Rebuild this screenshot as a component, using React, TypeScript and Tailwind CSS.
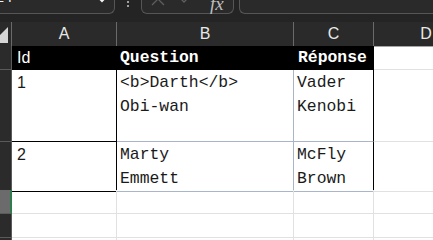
import React from 'react';

const gridCols = 'grid grid-cols-[12px_105px_177px_80px_105px]';
const mono = "font-['Liberation_Mono',monospace] text-[16.4px] leading-[24px]";
const sans = "font-['Liberation_Sans',Arial,sans-serif]";

interface Row {
  id: string;
  question: string[];
  answer: string[];
  height: string;
}

const rows: Row[] = [
  { id: '1', question: ['<b>Darth</b>', 'Obi-wan'], answer: ['Vader', 'Kenobi'], height: 'h-[72px]' },
  { id: '2', question: ['Marty', 'Emmett'], answer: ['McFly', 'Brown'], height: 'h-[48px]' },
];

function TopBar() {
  return (
    <div className="flex h-[22px] bg-[#242424] items-start">
      <div className="-ml-[20px] -mt-[17px] flex h-[31px] w-[135px] items-center justify-between rounded-br-[6px] border-r border-b border-[#565656] bg-[#2a2a2a] pl-[14px] pr-[7px]">
        <span className={`${sans} -mt-[4px] text-[15px] leading-none text-[#f0f0f0]`}>E4</span>
        <svg width="10" height="8" viewBox="0 0 10 8" className="mt-[3px]">
          <path d="M1 1 L5 5 L9 1" stroke="#f5f5f5" strokeWidth="2" fill="none" strokeLinecap="round" />
        </svg>
      </div>
      <div className="ml-[11px] flex w-[4px] flex-col items-center gap-[2px] pt-[1px]">
        <span className="block h-[2px] w-[2px] rounded-full bg-[#c8c8c8]" />
        <span className="block h-[2px] w-[2px] rounded-full bg-[#c8c8c8]" />
      </div>
      <div className="ml-[11px] -mt-[17px] flex h-[31px] w-[93px] items-center rounded-b-[6px] border-x border-b border-[#565656] bg-[#2a2a2a] pl-[8px]">
        <svg width="16" height="16" viewBox="0 0 16 16" className="mt-[1px]">
          <path d="M2 2 L14 14 M14 2 L2 14" stroke="#5e5e5e" strokeWidth="1.3" fill="none" />
        </svg>
        <svg width="14" height="10" viewBox="0 0 14 10" className="ml-[12px] mt-[3px]">
          <path d="M1 2 L6 7 L13 0" stroke="#5e5e5e" strokeWidth="1.3" fill="none" />
        </svg>
        <span className="ml-[18px] mt-[11px] font-['Liberation_Serif',serif] text-[19px] italic leading-none text-[#bdbdbd]">fx</span>
      </div>
      <div className="ml-[5px] -mt-[17px] h-[31px] flex-1 rounded-bl-[6px] border-l border-b border-[#565656] bg-[#2a2a2a]" />
    </div>
  );
}

function ColumnHeaders() {
  const letters = ['A', 'B', 'C', 'D'];
  return (
    <div className={`${gridCols} h-[24px] bg-[#2a2a2a]`}>
      <div className="flex items-end justify-end overflow-hidden border-r border-b border-r-[#6a6a6a] border-b-[#a5a5a5] pr-[3px] pb-[2px]">
        <svg width="9" height="18" viewBox="0 0 9 18">
          <path d="M9 0 L9 18 L-9 18 Z" fill="#d6d6d6" />
        </svg>
      </div>
      {letters.map((l) => (
        <div
          key={l}
          className={`${sans} flex items-center justify-center border-r border-b border-r-[#6a6a6a] border-b-[#a5a5a5] text-[16px] text-[#e8e8e8]`}
        >
          {l}
        </div>
      ))}
    </div>
  );
}

export default function App() {
  return (
    <div className="h-[240px] w-[433px] overflow-hidden bg-white">
      <TopBar />
      <ColumnHeaders />

      <div className={`${gridCols} h-[24px]`}>
        <div className="border-r border-b border-[#5a5a5a] bg-[#2b2b2b]" />
        <div className={`${sans} bg-black pl-[5px] text-[16px] leading-[23px] text-white`}>Id</div>
        <div className={`${mono} bg-black pl-[3px] font-bold leading-[23px] text-white`}>Question</div>
        <div className={`${mono} bg-black pl-[4px] font-bold leading-[23px] text-white`}>Réponse</div>
        <div className="border-b border-r border-[#e1e1e1]" />
      </div>

      {rows.map((r) => (
        <div key={r.id} className={`${gridCols} ${r.height}`}>
          <div className="border-r border-b border-[#5a5a5a] bg-[#2b2b2b]" />
          <div className={`${sans} border-r border-b border-black pl-[5px] pt-[1px] text-[16px] leading-[24px] text-[#1a1a1a]`}>
            {r.id}
          </div>
          <div className={`${mono} border-r border-b border-[#a9b6ca] pl-[3px] pt-[1px] text-[#1a1a1a]`}>
            {r.question.map((q) => (
              <div key={q}>{q}</div>
            ))}
          </div>
          <div className={`${mono} border-r border-b border-r-black border-b-[#a9b6ca] pl-[3px] pt-[1px] text-[#1a1a1a]`}>
            {r.answer.map((a) => (
              <div key={a}>{a}</div>
            ))}
          </div>
          <div className="border-r border-b border-[#e1e1e1]" />
        </div>
      ))}

      {[0, 1, 2].map((i) => (
        <div key={i} className={`${gridCols} h-[24px]`}>
          <div
            className={
              i === 0
                ? 'border-r-2 border-b border-r-[#2f7d4c] border-b-[#5a5a5a] bg-[#6b6b6b]'
                : 'border-r border-b border-[#5a5a5a] bg-[#2b2b2b]'
            }
          />
          <div className="border-r border-b border-[#e1e1e1]" />
          <div className="border-r border-b border-[#e1e1e1]" />
          <div className="border-r border-b border-[#e1e1e1]" />
          <div className="border-r border-b border-[#e1e1e1]" />
        </div>
      ))}
    </div>
  );
}
